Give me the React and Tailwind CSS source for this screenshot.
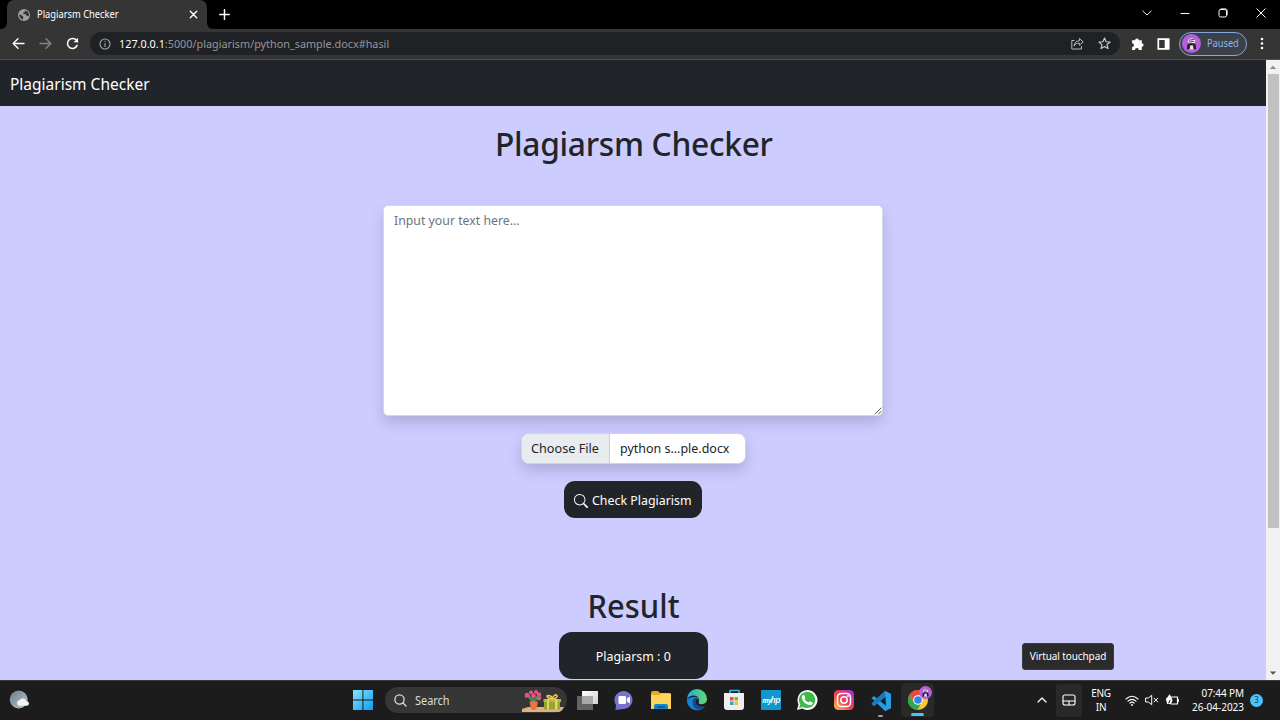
import React from "react";

const stroke = { fill: "none", stroke: "currentColor", strokeLinecap: "round", strokeLinejoin: "round" };

function Globe() {
  return (
    <svg className="size-3 shrink-0" viewBox="0 0 12 12">
      <circle cx="6" cy="6" r="6" fill="#9aa0a6" />
      <path d="M1.2 5.3 3.6 6.2 5.2 7.5 5 10.7C2.6 10.2 1.1 8.2 1.2 5.3ZM5 1.2 7.4 1.3 7.2 2.8 5.4 3.5 5.2 5 7.8 5.3 8.7 7 10.6 7.3 11 5.2C10.6 2.7 8.4 1 5 1.2Z" fill="#35363a" />
    </svg>
  );
}

function Avatar({ className }) {
  return (
    <svg className={className} viewBox="0 0 20 20">
      <circle cx="10" cy="10" r="10" fill="#b65fdb" />
      <path d="M6 7.2C6.2 3.6 13.8 3.6 14 7.2L13 9.8H7Z" fill="#eee8f0" />
      <path d="M7 6.5 13 5.7M7.5 8.4 12.5 7.8" stroke="#4a3a52" strokeWidth="1" />
      <path d="M5.8 10.6 10 9.4 14.2 10.6 15 16H12.2L11.6 12H8.6L8 16H5Z" fill="#28202e" />
      <path d="M8.6 12H11.5L12 16.2H8.2Z" fill="#f0e3ea" />
    </svg>
  );
}

function TabStrip() {
  return (
    <div className="flex h-[29px] shrink-0 bg-black">
      <div className="flex w-[7px] items-end bg-[#353535]">
        <div className="h-full w-full rounded-br-[6px] bg-black" />
      </div>
      <div className="flex h-full w-[200px] items-center rounded-t-[7px] bg-[#353535] pl-[11px] pr-[9px] text-white">
        <Globe />
        <span className="ml-[7px] inline-block origin-left scale-x-[0.933] whitespace-nowrap text-[10px]">Plagiarsm Checker</span>
        <svg className="ml-auto size-[9px]" viewBox="0 0 9 9" {...stroke} strokeWidth="1.4"><path d="M1.3 1.3 7.7 7.7M7.7 1.3 1.3 7.7" /></svg>
      </div>
      <div className="w-[7px] bg-[#353535]"><div className="h-full w-full rounded-bl-[6px] bg-black" /></div>
      <svg className="mt-[9px] ml-[5px] size-[11px] text-white" viewBox="0 0 11 11" {...stroke} strokeWidth="1.5"><path d="M5.5.7V10.3M.7 5.5H10.3" /></svg>
      <div className="ml-auto flex h-[25px] items-center text-white">
        <svg className="mr-[28px] h-[6px] w-[10px]" viewBox="0 0 10 6" {...stroke} strokeWidth=".9"><path d="M.8 1 5 5 9.2 1" /></svg>
        <svg className="mr-[28px] h-[10px] w-[10px]" viewBox="0 0 10 10" {...stroke}><path d="M1 5.5H9" /></svg>
        <svg className="mr-[28px] size-[10px]" viewBox="0 0 10 10" {...stroke} strokeWidth="1"><rect x="1" y="1.5" width="7.5" height="7.5" rx="1.6" /><path d="M3 .7H7.2Q9.4.7 9.4 2.9V7" strokeWidth=".7" /></svg>
        <svg className="mr-[14px] size-[10px]" viewBox="0 0 10 10" {...stroke} strokeWidth="1"><path d="M.8.8 9.2 9.2M9.2.8.8 9.2" /></svg>
      </div>
    </div>
  );
}

function Toolbar() {
  return (
    <div className="flex h-[31px] shrink-0 items-center border-b border-[#4c4d50] bg-[#353535] pb-px text-white">
      <svg className="ml-[12px] size-[13px] shrink-0" viewBox="0 0 13 13" {...stroke} strokeWidth="1.4"><path d="M12 6.5H1.3M6 1.7 1.2 6.5 6 11.3" /></svg>
      <svg className="ml-[14px] size-[13px] shrink-0 text-[#858585]" viewBox="0 0 13 13" {...stroke} strokeWidth="1.4"><path d="M1 6.5H11.7M7 1.7 11.8 6.5 7 11.3" /></svg>
      <svg className="ml-[14px] size-[13px] shrink-0" viewBox="0 0 13 13" {...stroke} strokeWidth="1.5"><path d="M11.1 8.4A5 5 0 1 1 10.7 3.7L11.5 4.7" /><path d="M12 .8V5.2H7.6Z" fill="currentColor" stroke="none" /></svg>
      <div className="ml-[11px] flex h-[23px] w-[1030px] shrink-0 items-center rounded-full bg-[#202124] pl-[9px] pr-[9px]">
        <svg className="size-[12px] shrink-0 text-[#a2a5a9]" viewBox="0 0 12 12" {...stroke} strokeWidth="1.1"><circle cx="6" cy="6" r="5" /><path d="M6 5.5V8.5M6 3.4V3.5" /></svg>
        <span className="ml-[8px] inline-block origin-left scale-x-[0.941] whitespace-nowrap text-[11.5px] text-[#94979a]"><span className="text-white">127.0.0.1</span>:5000/plagiarism/python_sample.docx#hasil</span>
        <svg className="ml-auto size-[13px] shrink-0 text-[#b8bbbd]" viewBox="0 0 13 13" {...stroke} strokeWidth="1"><path d="M3.2 3.5H.8V12H10.5V9.5M3.2 8.6C3.7 5.3 5.6 3.8 8.4 3.7V1.4L12.2 4.9 8.4 8.3V6.1C6.2 6 4.4 6.8 3.2 8.6Z" /></svg>
        <svg className="ml-[14px] size-[13px] shrink-0 text-[#d0d2d5]" viewBox="0 0 13 13" {...stroke} strokeWidth="1.1"><path d="M6.5 1 8.1 4.7 12.1 5 9 7.6 10 11.6 6.5 9.5 3 11.6 4 7.6.9 5 4.9 4.7Z" /></svg>
      </div>
      <svg className="ml-[11px] size-[14px] shrink-0" viewBox="0 0 13 13" fill="white"><path d="M1 3H3.8A1.7 1.7 0 1 1 7.2 3H10V5.8A1.7 1.7 0 1 1 10 9.2V12H7.3A1.8 1.8 0 0 0 3.7 12H1V9.3A1.8 1.8 0 0 0 1 5.7Z" /></svg>
      <svg className="ml-[12px] h-[12px] w-[13px] shrink-0" viewBox="0 0 13 12"><path d="M1.3 1.2H11.7V10.8H1.3Z" fill="none" stroke="white" strokeWidth="1.7" /><path d="M7.7 1H12V11H7.7Z" fill="white" /></svg>
      <div className="ml-[9px] flex h-[24px] w-[68px] shrink-0 items-center rounded-full border border-[#83a6df] bg-[#3c4048] pl-[2px] text-[#91b4ee]">
        <Avatar className="size-[19px] shrink-0" />
        <span className="ml-[6px] inline-block origin-left scale-x-[0.88] text-[10.5px]">Paused</span>
      </div>
      <svg className="ml-[13px] h-[13px] w-[4px] shrink-0" viewBox="0 0 4 13" fill="white"><circle cx="2" cy="2" r="1.3" /><circle cx="2" cy="6.5" r="1.3" /><circle cx="2" cy="11" r="1.3" /></svg>
    </div>
  );
}

function Page() {
  return (
    <div className="flex h-[620px] shrink-0 overflow-hidden">
      <main className="flex w-[1266px] flex-col items-center bg-[#ccccff] text-[#212529]">
        <nav className="flex h-[46px] w-full shrink-0 items-center bg-[#212529] pl-[10px] text-[16.67px] text-white">
          <span className="inline-block origin-left scale-x-[0.93] whitespace-nowrap">Plagiarism Checker</span>
        </nav>
        <h1 className="mt-[17px] ml-px h-[40px] scale-x-[0.952] whitespace-nowrap text-[33.3px] font-medium leading-[40px] tracking-[-0.3px]">Plagiarsm Checker</h1>
        <div className="mt-[42px] flex h-[211px] w-[500px] shrink-0 items-start rounded-[5px] border border-[#d3d8e2] bg-white pl-[10px] pt-[4px] text-[13.33px] leading-5 text-[#6c757d] shadow-[0_7px_14px_rgba(0,0,0,0.15)]">
          <span className="inline-block origin-left scale-x-[0.923] whitespace-nowrap">Input your text here...</span>
          <svg className="ml-auto size-[8px] self-end text-[#555]" viewBox="0 0 8 8" {...stroke} strokeWidth="1"><path d="M1 7 7 1M4.5 7 7 4.5" /></svg>
        </div>
        <div className="mt-[17px] ml-px flex h-[31px] w-[225px] shrink-0 overflow-hidden rounded-[8px] border border-[#bfd6f7] bg-white text-[13.33px] leading-[29px] shadow-[0_7px_14px_rgba(0,0,0,0.15)]">
          <div className="w-[88px] shrink-0 border-r border-[#b7d1f8] bg-[#e9ecef] pl-[9px]"><span className="inline-block origin-left scale-x-[0.95] whitespace-nowrap">Choose File</span></div>
          <span className="ml-[10px] inline-block origin-left scale-x-[0.935] whitespace-nowrap">python s...ple.docx</span>
        </div>
        <div className="mt-[17px] flex h-[37px] w-[138px] shrink-0 items-center rounded-[11px] bg-[#212529] pl-[10px] text-[13.33px] text-white">
          <svg className="mt-[3px] size-[14px] shrink-0" viewBox="0 0 16 16" fill="currentColor"><path d="M11.742 10.344a6.5 6.5 0 1 0-1.397 1.398h-.001c.03.04.062.078.098.115l3.85 3.85a1 1 0 0 0 1.415-1.414l-3.85-3.85a1 1 0 0 0-.115-.1zM12 6.5a5.5 5.5 0 1 1-11 0 5.5 5.5 0 0 1 11 0z" /></svg>
          <span className="ml-[4px] inline-block origin-left scale-x-[0.93] whitespace-nowrap pt-[2px]">Check Plagiarism</span>
        </div>
        <h1 className="mt-[67px] h-[40px] shrink-0 scale-x-[0.93] text-[33.3px] font-medium leading-[40px]">Result</h1>
        <div className="mt-[7px] flex h-[47px] w-[149px] shrink-0 items-center justify-center rounded-[13px] bg-[#212529] pt-[2px] text-[13.33px] text-white"><span className="inline-block scale-x-[0.93] whitespace-nowrap">Plagiarsm : 0</span></div>
      </main>
      <div className="flex w-[14px] flex-col items-center bg-[#f1f1f1]">
        <svg className="h-[14px] w-[14px] shrink-0" viewBox="0 0 14 14"><path d="M3.8 9 7 5.8 10.2 9Z" fill="#8b8b8b" /></svg>
        <div className="h-[454px] w-[11px] bg-[#c1c1c1]" />
        <svg className="mt-auto h-[14px] w-[14px]" viewBox="0 0 14 14"><path d="M4 5.5 7 8.7 10 5.5Z" fill="#505050" /></svg>
      </div>
    </div>
  );
}

function Task({ children, label }) {
  return <div className="flex w-[36.7px] shrink-0 justify-center" aria-label={label}><svg className="size-[22px]" viewBox="0 0 22 22">{children}</svg></div>;
}

function Taskbar() {
  return (
    <footer className="flex h-[40px] shrink-0 items-center border-t border-[#393940] bg-[#1c1c1c] pb-px text-white">
      <div className="w-[352px] shrink-0 pl-[9px]">
        <svg className="size-[22px]" viewBox="0 0 22 22"><defs><linearGradient id="moon" x2="1" y2="1"><stop stopColor="#697d8a" /><stop offset="1" stopColor="#bcc7ce" /></linearGradient></defs><circle cx="9.7" cy="10.5" r="9" fill="url(#moon)" /><path d="M10 16.8A2.9 2.9 0 0 1 10.4 11.2 3.8 3.8 0 0 1 17.3 12.2 2.3 2.3 0 0 1 18 16.8Z" fill="#f1f3f5" /></svg>
      </div>
      <svg className="size-[22px] shrink-0" viewBox="0 0 22 22"><defs><linearGradient id="win" x2="1" y2="1"><stop stopColor="#89e5ff" /><stop offset="1" stopColor="#0c9bec" /></linearGradient></defs><path d="M1 1H10.4V10.4H1ZM11.4 1H21V10.4H11.4ZM1 11.4H10.4V21H1ZM11.4 11.4H21V21H11.4Z" fill="url(#win)" /></svg>
      <div className="ml-[11px] flex h-[26px] w-[182px] shrink-0 items-center overflow-hidden rounded-full bg-[#363636] pl-[9px] text-[#ddd]">
        <svg className="size-[13px]" viewBox="0 0 13 13" {...stroke} strokeWidth="1.3"><circle cx="5.5" cy="5.5" r="4.6" /><path d="M9 9 12 12" /></svg>
        <span className="ml-[8px] inline-block origin-left scale-x-[0.91] pt-px text-[12px]">Search</span>
        <svg className="ml-auto h-[26px] w-[46px]" viewBox="0 0 46 26">
          <path d="M7 20H43L40 25H1V22Z" fill="#dfb181" />
          <path d="M12 16 8 8M12 16V6M12 16 18 7" stroke="#479853" strokeWidth="1.6" />
          <path d="M4 10Q8 8 12 16Q18 8 20 11" fill="none" stroke="#4d8b4c" strokeWidth="2" />
          <g fill="#e95182"><circle cx="6" cy="8" r="2.3" /><circle cx="10" cy="5.5" r="2" /><circle cx="15" cy="5" r="2" /><circle cx="18" cy="7.5" r="2.2" /><circle cx="12.5" cy="9" r="2.3" /><circle cx="18" cy="11.5" r="1.9" /></g>
          <path d="M8.5 14.5H17L15.5 22Q12 24 10 22Z" fill="#e4783c" />
          <path d="M23 14H39V22.5H23Z" fill="#90a73a" /><path d="M22.5 12H40V15H22.5Z" fill="#aabb49" />
          <path d="M26 12V22.5H28V12ZM34 12V22.5H36.5V12Z" fill="#f6cf4b" /><path d="M31 12C25 11 25 8 28 8.5Q31 9 31 12Q34 6 36 8.7 37 11 31 12" fill="none" stroke="#f6c74a" strokeWidth="1.5" />
        </svg>
      </div>
      <div className="ml-[2px] flex shrink-0 items-center">
        <Task label="Task view"><defs><linearGradient id="view" x2="1" y2="1"><stop stopColor="#fff" /><stop offset="1" stopColor="#d2d2d2" /></linearGradient></defs><path d="M1 7H17V21H1Z" fill="#636363" /><path d="M6 2H22V15H6Z" fill="url(#view)" /><path d="M6 7H17V15H6Z" fill="#a8a8a8" /></Task>
        <Task label="Chat"><path d="M3 16A9 9 0 1 1 10 20L2.5 21Z" fill="#7773cc" /><rect x="5.5" y="7" width="7.5" height="8" rx="1.3" fill="white" /><path d="M13.8 9.5 17 7.5V14.5L13.8 12.5Z" fill="white" /></Task>
        <Task label="Files"><path d="M1 4Q1 2 3 2H8L10 4H20V20H1Z" fill="#e7a91d" /><path d="M1 6H9L11 4.5H21V20H1Z" fill="#ffd45a" /><path d="M4 17Q4 15 6 15H16Q18 15 18 17V20H4Z" fill="#1683cf" /><path d="M7 18H15" stroke="#07518f" strokeWidth="1.4" /></Task>
        <Task label="Browser">
          <defs>
            <linearGradient id="edge"><stop stopColor="#20aae6" /><stop offset="1" stopColor="#62db68" /></linearGradient>
          </defs>
          <path d="M1 10A10 10 0 0 0 18.8 17.4C15 19 9 17 9.5 12 10 9.5 11.5 9 13 11.3 13.5 7 8 6.5 1 10Z" fill="#1583d2" />
          <path d="M7 11C5.5 16 9 21 13.5 20.6 16 20 18 18.8 19.2 17 15 18.5 9 16.5 9.7 12 9.9 10.5 11 9.7 12 9.8 10.5 8 8 8.5 7 11Z" fill="#124b91" />
          <path d="M1 10A10 10 0 0 1 21 10Q21 15 15.5 15.2 11.5 15.2 13 12 13.5 7 8 6.5 3.5 6.2 1 10Z" fill="url(#edge)" />
        </Task>
        <Task label="Store"><path d="M7 7V1.5H16V7" fill="none" stroke="#42b5e8" strokeWidth="1.5" /><path d="M1 4H21V18Q21 21 18 21H4Q1 21 1 18Z" fill="#eee" /><path d="M7 8H10.5V11.5H7Z" fill="#eb5033" /><path d="M11.5 8H15V11.5H11.5Z" fill="#80b82a" /><path d="M7 12.5H10.5V16H7Z" fill="#26a3dd" /><path d="M11.5 12.5H15V16H11.5Z" fill="#fdb922" /></Task>
        <Task label="myHP"><rect x="1" y="1" width="20" height="20" rx="1" fill="#1097cf" /><text x="2.3" y="13.5" fill="white" fontFamily="Open Sans, sans-serif" fontStyle="italic" fontSize="6.6" fontWeight="700" letterSpacing="-.3">my</text><text x="10.6" y="14" fill="white" fontFamily="Open Sans, sans-serif" fontStyle="italic" fontSize="9" fontWeight="600" letterSpacing="-.6">hp</text></Task>
        <Task label="WhatsApp"><path d="M1 21 2.5 15.5A10 10 0 1 1 6.2 19.6Z" fill="white" /><path d="M3 19 4.3 15.5A8.2 8.2 0 1 1 7 18Z" fill="#40b84a" /><path d="M8 5.7 9.4 8.8 8.5 10.1Q10 12.8 12.5 13.6L13.8 12.2 17 13.7Q16.2 17 12.8 16 7.4 14.7 5.9 9 5.5 6.3 8 5.7Z" fill="white" /></Task>
        <Task label="Instagram"><defs><linearGradient id="insta" x1="0" y1="1" x2="1" y2="0"><stop stopColor="#ffc84a" /><stop offset=".45" stopColor="#f4404e" /><stop offset="1" stopColor="#a42ce0" /></linearGradient></defs><rect x="1" y="1" width="20" height="20" rx="4.5" fill="url(#insta)" /><g fill="none" stroke="white" strokeWidth="1.5"><rect x="4.5" y="4.5" width="13" height="13" rx="3.8" /><circle cx="11" cy="11" r="3.2" /></g><circle cx="15" cy="7" r="1" fill="white" /></Task>
        <div className="flex w-[36.7px] flex-col items-center pt-[6px]"><svg className="size-[22px]" viewBox="0 0 22 22"><path d="M15 1 21 4V18L15 21 1.5 8 4 6 16 15.8V6.2L4 16 1.5 14Z" fill="#259ddc" /><path d="M15 1 4.8 10 1.5 13.8 4 16 16 6.2Z" fill="#1c78bd" /><path d="M15 1 21 4V18L15 21 16 16Z" fill="#28a0e8" /></svg><span className="mt-[3px] h-[2px] w-[5px] rounded bg-[#a0a0a0]" /></div>
        <div className="relative ml-[2px] flex h-[34px] w-[33px] flex-col items-center rounded-[4px] bg-[#292929] pt-[7px]">
          <svg className="size-[20px] shrink-0" viewBox="0 0 20 20"><circle cx="10" cy="10" r="10" fill="#fbc72f" /><path d="M1.3 5A10 10 0 0 1 18.7 5H10L6 12Z" fill="#e44b3b" /><path d="M1.3 5 6.3 13 12.5 14 9.6 20A10 10 0 0 1 1.3 5Z" fill="#30a852" /><circle cx="10" cy="10" r="4.8" fill="white" /><circle cx="10" cy="10" r="3.8" fill="#3681ef" /></svg>
          <span className="mt-[3px] h-[3px] w-[13px] rounded bg-[#4cc2ff]" />
          <Avatar className="absolute right-[2px] top-[3px] size-[13px]" />
        </div>
      </div>
      <div className="relative ml-auto flex h-full items-center">
        <div className="absolute bottom-[49px] left-[-15px] flex h-[27px] w-[92px] items-center justify-center whitespace-nowrap rounded-[3px] border border-[#3b3b3b] bg-[#2b2b2b] text-[10px] tracking-[-0.1px]">Virtual touchpad</div>
        <svg className="h-[6px] w-[10px]" viewBox="0 0 10 6" {...stroke} strokeWidth="1.2"><path d="M1 5 5 1 9 5" /></svg>
        <div className="ml-[9px] flex h-[33px] w-[26px] items-center justify-center rounded-[3px] bg-[#292929]"><svg className="h-[12px] w-[14px]" viewBox="0 0 14 12" {...stroke} strokeWidth="1.1"><rect x="1" y="1" width="12" height="10" rx="2" /><path d="M1 7H13M7 7V11" /></svg></div>
        <div className="ml-[7px] w-[24px] pt-px text-center text-[10px] leading-[13.3px] tracking-[-0.3px]">ENG<br />IN</div>
        <svg className="ml-[12px] h-[13px] w-[14px]" viewBox="0 0 14 13" {...stroke} strokeWidth="1.1"><path d="M1 5Q7-.4 13 5M3 7.2Q7 3.4 11 7.2M4.9 9.2Q7 7.2 9.1 9.2" /><circle cx="7" cy="11" r=".9" fill="currentColor" stroke="none" /></svg>
        <svg className="ml-[6px] h-[12px] w-[14px]" viewBox="0 0 14 12" {...stroke} strokeWidth="1"><path d="M1 4H3.3L6.7 1.3V10.7L3.3 8H1ZM9 4.2 12.7 8M12.7 4.2 9 8" /></svg>
        <svg className="ml-[6px] h-[13px] w-[15px]" viewBox="0 0 15 13" {...stroke} strokeWidth="1.1"><path d="M6.5 3H12.5V10H6M13.3 5.5V7.5" strokeWidth="1.2" /><path d="M1.5 5 3.5 3 4.5 1 6 4 7 6.5 5.5 9.5H2.5Z" fill="currentColor" /><path d="M3.8 8.7 5 6.5" stroke="#1c1c1c" /></svg>
        <div className="ml-[7px] w-[57px] whitespace-nowrap pt-px text-right text-[10px] leading-[13.3px]"><div className="tracking-[-0.1px]">07:44 PM</div><div className="tracking-[-0.02px]">26-04-2023</div></div>
        <div className="ml-[6px] mr-[17px] flex size-[13px] shrink-0 items-center justify-center rounded-full bg-[#4cc2ff] text-[8px] text-[#17384b]">3</div>
      </div>
    </footer>
  );
}

export default function App() {
  return (
    <div className="flex h-[720px] w-[1280px] flex-col overflow-hidden font-['Noto_Sans','Open_Sans',sans-serif]">
      <TabStrip />
      <Toolbar />
      <Page />
      <Taskbar />
    </div>
  );
}
